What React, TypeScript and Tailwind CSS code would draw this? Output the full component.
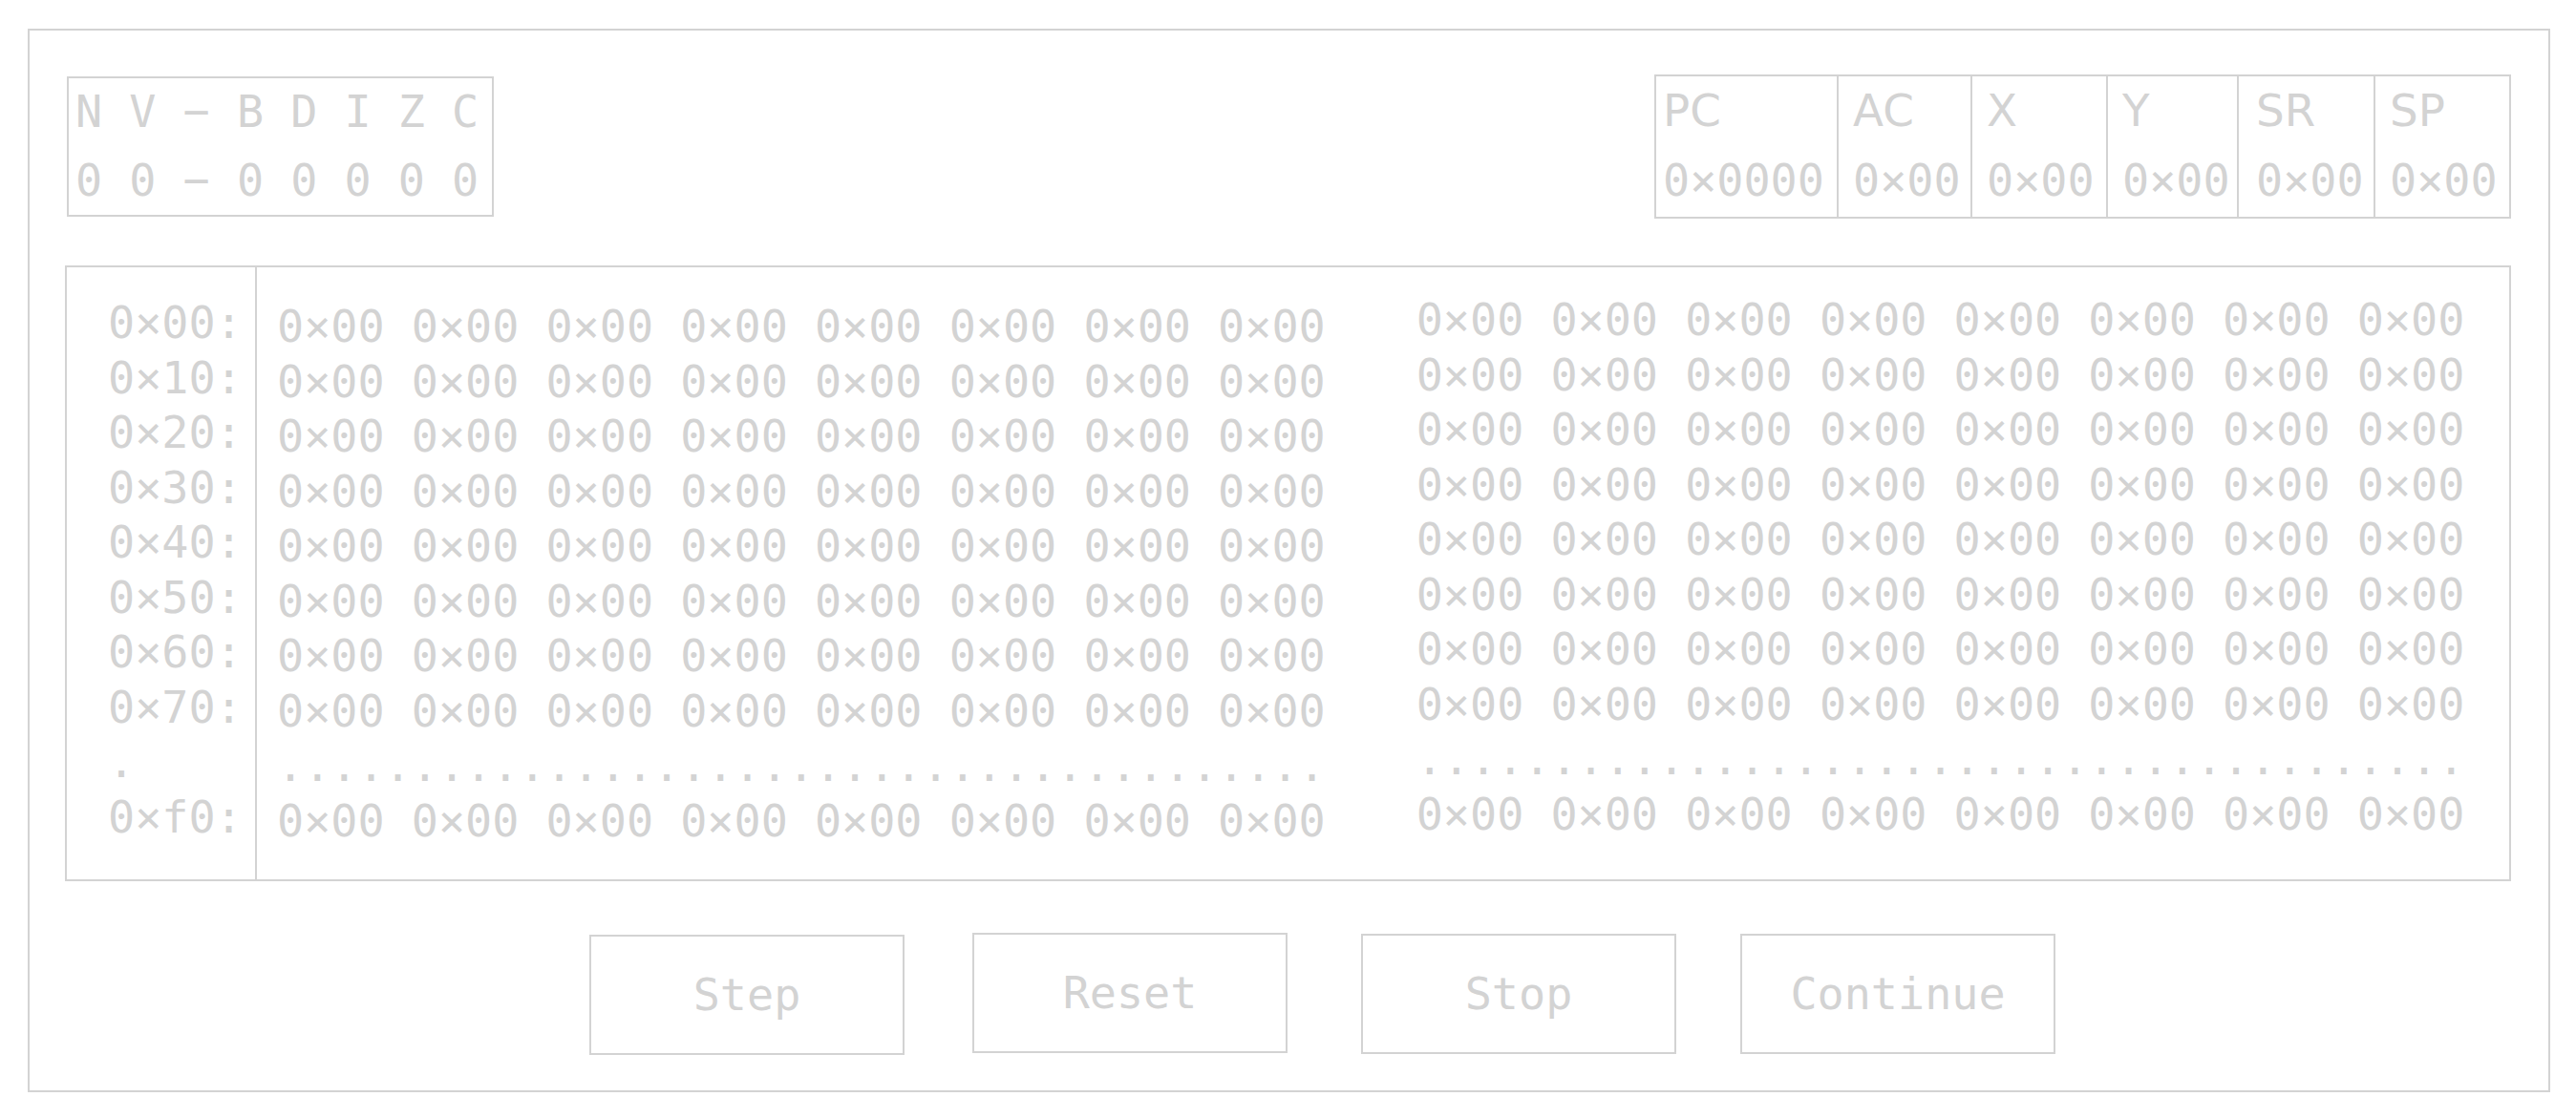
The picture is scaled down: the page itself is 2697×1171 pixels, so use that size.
const mono = "font-['DejaVu_Sans_Mono',monospace] text-[46.75px] text-[#d3d3d3]";

const registers = [
  { name: "PC", value: "0×0000", width: "w-[191px]", pad: "pl-[7px]" },
  { name: "AC", value: "0×00", width: "w-[140px]", pad: "pl-[15px]" },
  { name: "X", value: "0×00", width: "w-[142px]", pad: "pl-[15px]" },
  { name: "Y", value: "0×00", width: "w-[137px]", pad: "pl-[15px]" },
  { name: "SR", value: "0×00", width: "w-[143px]", pad: "pl-[18px]" },
  { name: "SP", value: "0×00", width: "w-[144px] border-r-2", pad: "pl-[15px]" },
];

const addresses = ["0×00:", "0×10:", "0×20:", "0×30:", "0×40:", "0×50:", "0×60:", "0×70:", ".", "0×f0:"];

const cellRow = Array(8).fill("0×00").join(" ");
const dotRow = ".".repeat(39);
const dataRows = [...Array(8).fill(cellRow), dotRow, cellRow];

const buttons = [
  { label: "Step", offset: "ml-[549px] mt-[1px]" },
  { label: "Reset", offset: "ml-[71px] -mt-[1px]" },
  { label: "Stop", offset: "ml-[77px]" },
  { label: "Continue", offset: "ml-[67px]" },
];

function Flags() {
  return (
    <div className={`${mono} ml-[2px] mt-[2px] w-[447px] border-2 border-[#d3d3d3] pl-[7px] leading-[71.5px] whitespace-pre`}>
      <div>N V − B D I Z C</div>
      <div>0 0 − 0 0 0 0 0</div>
    </div>
  );
}

function Registers() {
  return (
    <div className="mr-[2px] flex border-y-2 border-[#d3d3d3]">
      {registers.map((reg) => (
        <div key={reg.name} className={`${reg.width} ${reg.pad} flex h-[147px] flex-col border-l-2 border-[#d3d3d3]`}>
          <span className="font-['DejaVu_Sans',sans-serif] text-[46.75px] leading-[72px] text-[#d3d3d3]">{reg.name}</span>
          <span className={`${mono} leading-[75px]`}>{reg.value}</span>
        </div>
      ))}
    </div>
  );
}

function Memory() {
  return (
    <div className={`${mono} mt-[49px] flex h-[645px] w-[2561px] border-2 border-[#d3d3d3] leading-[57.5px] whitespace-pre`}>
      <div className="w-[199px] shrink-0 border-r-2 border-[#d3d3d3] pl-[43px] pt-[30px]">
        {addresses.map((addr, i) => (
          <div key={i}>{addr}</div>
        ))}
      </div>
      <div className="shrink-0 pl-[21px] pt-[34px]">
        {dataRows.map((row, i) => (
          <div key={i}>{row}</div>
        ))}
      </div>
      <div className="ml-[95px] shrink-0 pt-[27px]">
        {dataRows.map((row, i) => (
          <div key={i}>{row}</div>
        ))}
      </div>
    </div>
  );
}

export default function App() {
  return (
    <div className="h-[1171px] w-[2697px] bg-white pl-[29px] pt-[30px]">
      <div className="flex h-[1114px] w-[2641px] flex-col border-2 border-[#d3d3d3] px-[37px] pt-[46px]">
        <div className="flex items-start justify-between">
          <Flags />
          <Registers />
        </div>
        <Memory />
        <div className="mt-[55px] flex items-start">
          {buttons.map((btn) => (
            <button
              key={btn.label}
              type="button"
              className={`${mono} ${btn.offset} flex h-[126px] w-[330px] items-center justify-center border-2 border-[#d3d3d3] bg-white`}
            >
              {btn.label}
            </button>
          ))}
        </div>
      </div>
    </div>
  );
}
